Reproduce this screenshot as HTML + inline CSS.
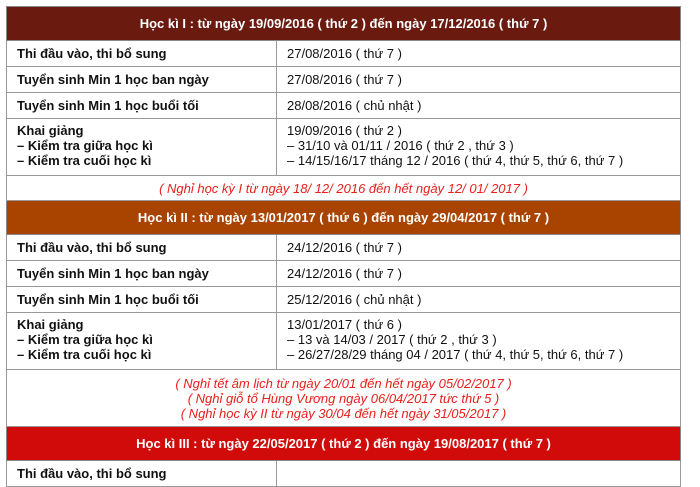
<!DOCTYPE html>
<html><head><meta charset="utf-8"><style>
body{margin:0;background:#fff;font-family:"Liberation Sans",Arial,sans-serif;font-size:13px;color:#111}
table{position:absolute;left:6px;top:6px;width:675px;border-collapse:collapse;table-layout:fixed}
td{border:1px solid #999;padding:0 0 0 10px;vertical-align:middle;line-height:15px;white-space:nowrap}
td.l{font-weight:bold}
.h td{color:#fff;font-weight:bold;text-align:center;padding:0;height:33px;border-color:#888}
.n td{color:#e8201c;font-style:italic;text-align:center;padding:0}
.r td{height:25px}
.k td{height:52px;vertical-align:top;padding-top:4px}
</style></head><body>
<table>
<colgroup><col style="width:270px"><col></colgroup>
<tr class="h"><td colspan="2" style="background:#6b1a10">Học kì I : từ ngày 19/09/2016 ( thứ 2 ) đến ngày 17/12/2016 ( thứ 7 )</td></tr>
<tr class="r"><td class="l">Thi đầu vào, thi bổ sung</td><td>27/08/2016 ( thứ 7 )</td></tr>
<tr class="r"><td class="l">Tuyển sinh Min 1 học ban ngày</td><td>27/08/2016 ( thứ 7 )</td></tr>
<tr class="r"><td class="l">Tuyển sinh Min 1 học buổi tối</td><td>28/08/2016 ( chủ nhật )</td></tr>
<tr class="k"><td class="l">Khai giảng<br>– Kiểm tra giữa học kì<br>– Kiểm tra cuối học kì</td><td>19/09/2016 ( thứ 2 )<br>– 31/10 và 01/11 / 2016 ( thứ 2 , thứ 3 )<br>– 14/15/16/17 tháng 12 / 2016 ( thứ 4, thứ 5, thứ 6, thứ 7 )</td></tr>
<tr class="n"><td colspan="2" style="height:24px">( Nghỉ học kỳ I từ ngày 18/ 12/ 2016 đến hết ngày 12/ 01/ 2017 )</td></tr>
<tr class="h"><td colspan="2" style="background:#a94400">Học kì II : từ ngày 13/01/2017 ( thứ 6 ) đến ngày 29/04/2017 ( thứ 7 )</td></tr>
<tr class="r"><td class="l">Thi đầu vào, thi bổ sung</td><td>24/12/2016 ( thứ 7 )</td></tr>
<tr class="r"><td class="l">Tuyển sinh Min 1 học ban ngày</td><td>24/12/2016 ( thứ 7 )</td></tr>
<tr class="r"><td class="l">Tuyển sinh Min 1 học buổi tối</td><td>25/12/2016 ( chủ nhật )</td></tr>
<tr class="k"><td class="l">Khai giảng<br>– Kiểm tra giữa học kì<br>– Kiểm tra cuối học kì</td><td>13/01/2017 ( thứ 6 )<br>– 13 và 14/03 / 2017 ( thứ 2 , thứ 3 )<br>– 26/27/28/29 tháng 04 / 2017 ( thứ 4, thứ 5, thứ 6, thứ 7 )</td></tr>
<tr class="n"><td colspan="2" style="height:56px">( Nghỉ tết âm lịch từ ngày 20/01 đến hết ngày 05/02/2017 )<br>( Nghỉ giỗ tổ Hùng Vương ngày 06/04/2017 tức thứ 5 )<br>( Nghỉ học kỳ II từ ngày 30/04 đến hết ngày 31/05/2017 )</td></tr>
<tr class="h"><td colspan="2" style="background:#d10a0a">Học kì III : từ ngày 22/05/2017 ( thứ 2 ) đến ngày 19/08/2017 ( thứ 7 )</td></tr>
<tr class="r"><td class="l">Thi đầu vào, thi bổ sung</td><td>&nbsp;</td></tr>
</table>
</body></html>
